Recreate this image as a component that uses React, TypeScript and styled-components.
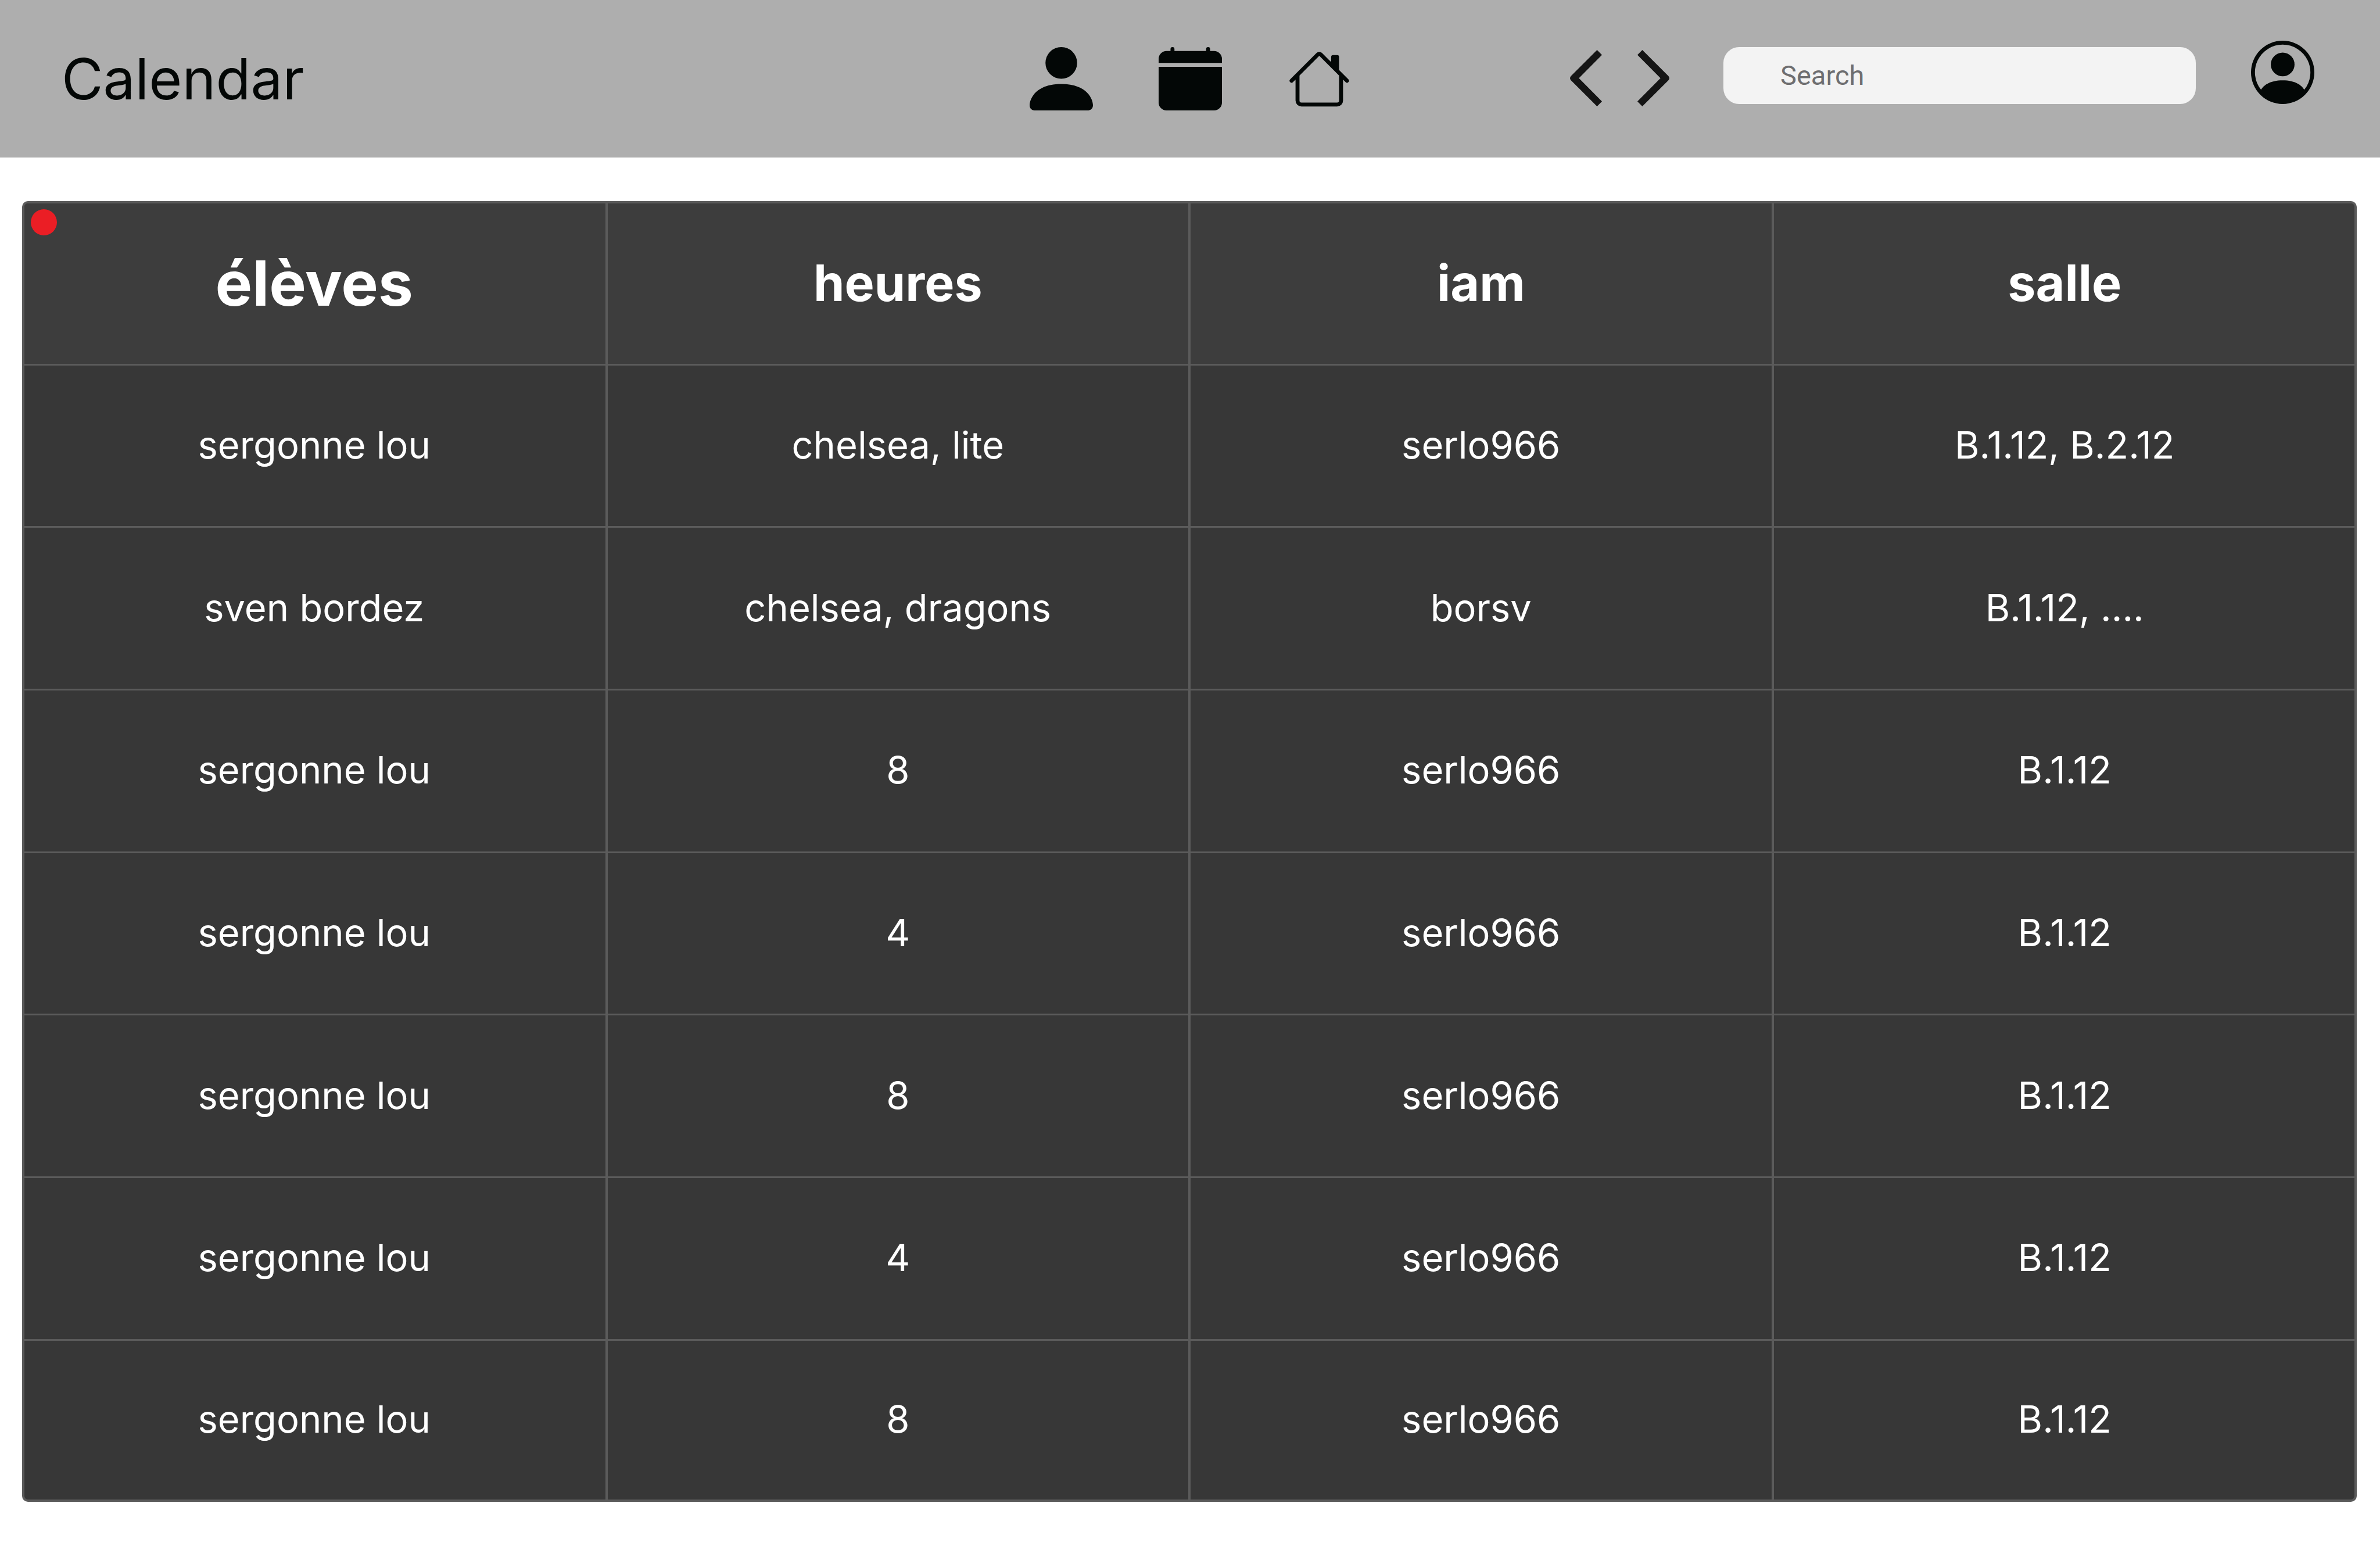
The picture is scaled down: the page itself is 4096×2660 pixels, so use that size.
import React from "react";
import styled, { createGlobalStyle } from "styled-components";

const GlobalStyle = createGlobalStyle`
  *, *::before, *::after { box-sizing: border-box; }
  body {
    margin: 0;
    background: #ffffff;
    font-family: Inter, "Liberation Sans", sans-serif;
  }
`;

const Page = styled.div`
  display: flex;
  flex-direction: column;
  min-height: 100vh;
`;

const TopBar = styled.header`
  display: grid;
  grid-template-columns: 1fr auto 1fr;
  height: 271px;
  padding: 0 106px;
  background: #aeaeae;
  color: #030706;
`;

const Title = styled.h1`
  align-self: center;
  margin: 0;
  font-size: 98px;
  line-height: 120px;
  font-weight: 400;
`;

const Nav = styled.nav`
  display: flex;
  align-self: center;
  gap: 113px;
`;

const IconLink = styled.a`
  display: block;
  color: inherit;

  svg { display: block; width: 109px; height: 109px; }
`;

const Tools = styled.div`
  display: flex;
  align-self: start;
  align-items: center;
  justify-content: flex-end;
  padding: 66px 7px 0 0;
`;

const Pager = styled.div`
  display: flex;
  gap: 61px;
  margin: 20px 93px 0 0;
`;

const IconButton = styled.button`
  display: block;
  padding: 0;
  border: 0;
  background: none;
  color: inherit;
  cursor: pointer;

  svg { display: block; }
`;

const SearchInput = styled.input`
  width: 813px;
  height: 98px;
  margin: 10px 95px 0 0;
  padding: 0 40px 0 98px;
  border: 0;
  border-radius: 27px;
  background: #f3f3f3;
  color: #2b2b2b;
  font-family: Roboto, "Liberation Sans", sans-serif;
  font-size: 47px;
  font-weight: 400;

  &::placeholder { color: #6e6e70; opacity: 1; }
`;

const Main = styled.main`
  flex: 1;
  padding: 75px 40px 76px 38px;
`;

const TableFrame = styled.div`
  position: relative;
  overflow: hidden;
  border: 4px solid #5b5b5b;
  border-radius: 10px;
  background: #373737;
`;

const RecordDot = styled.span`
  position: absolute;
  top: 10px;
  left: 11px;
  width: 45px;
  height: 45px;
  border-radius: 50%;
  background: #eb1e25;
`;

const Table = styled.table`
  width: calc(100% + 4px);
  height: calc(100vh - 430px);
  margin: 0 -2px;
  table-layout: fixed;
  border-collapse: collapse;
  color: #ffffff;
  text-align: center;

  tr + tr > td, tbody > tr:first-child > td { border-top: 3px solid #5b5b5b; }
  th + th, td + td { border-left: 4px solid #5b5b5b; }
`;

const HeadCell = styled.th<{ $large?: boolean }>`
  height: 277px;
  padding: 0 0 2px;
  background: #3d3d3d;
  font-size: ${(p) => (p.$large ? 107 : 86)}px;
  line-height: 130px;
  font-weight: 700;
`;

const Cell = styled.td`
  padding: 0 0 2px;
  font-size: 65px;
  line-height: 80px;
`;

const PersonIcon = () => (
  <svg viewBox="2 2 12 12" fill="currentColor" aria-hidden="true">
    <path d="M3 14s-1 0-1-1 1-4 6-4 6 3 6 4-1 1-1 1H3zm5-6a3 3 0 1 0 0-6 3 3 0 0 0 0 6z" />
  </svg>
);

const CalendarIcon = () => (
  <svg viewBox="0 0 16 16" fill="currentColor" aria-hidden="true">
    <path d="M3.5 0a.5.5 0 0 1 .5.5V1h8V.5a.5.5 0 0 1 1 0V1h1a2 2 0 0 1 2 2v11a2 2 0 0 1-2 2H2a2 2 0 0 1-2-2V5h16V4H0V3a2 2 0 0 1 2-2h1V.5a.5.5 0 0 1 .5-.5z" />
  </svg>
);

const HouseIcon = () => (
  <svg viewBox="0 0 16 16" fill="currentColor" aria-hidden="true">
    <path
      fillRule="evenodd"
      d="M8.707 1.5a1 1 0 0 0-1.414 0L.646 8.146a.5.5 0 0 0 .708.708L2 8.207V13.5A1.5 1.5 0 0 0 3.5 15h9a1.5 1.5 0 0 0 1.5-1.5V8.207l.646.647a.5.5 0 0 0 .708-.708L13 5.793V2.5a.5.5 0 0 0-.5-.5h-1a.5.5 0 0 0-.5.5v1.293L8.707 1.5zM13 7.207V13.5a.5.5 0 0 1-.5.5h-9a.5.5 0 0 1-.5-.5V7.207l5-5 5 5z"
    />
  </svg>
);

const AccountIcon = () => (
  <svg width="109" height="109" viewBox="0 0 16 16" fill="currentColor" aria-hidden="true">
    <path d="M11 6a3 3 0 1 1-6 0 3 3 0 0 1 6 0z" />
    <path
      fillRule="evenodd"
      d="M0 8a8 8 0 1 1 16 0A8 8 0 0 1 0 8zm8-7a7 7 0 0 0-5.468 11.37C3.242 11.226 4.805 10 8 10s4.757 1.225 5.468 2.37A7 7 0 0 0 8 1z"
    />
  </svg>
);

const Chevron = ({ flip = false }: { flip?: boolean }) => (
  <svg width="55" height="97" viewBox="0 0 169 298" fill="#151515" aria-hidden="true">
    <path
      transform={flip ? "translate(169 0) scale(-1 1)" : undefined}
      d="M143 0L169 26L47 149L169 272L143 298L6 161Q0 155 0 149Q0 143 6 137Z"
    />
  </svg>
);

const columns = ["élèves", "heures", "iam", "salle"];

const rows = [
  ["sergonne lou", "chelsea, lite", "serlo966", "B.1.12, B.2.12"],
  ["sven bordez", "chelsea, dragons", "borsv", "B.1.12, ...."],
  ["sergonne lou", "8", "serlo966", "B.1.12"],
  ["sergonne lou", "4", "serlo966", "B.1.12"],
  ["sergonne lou", "8", "serlo966", "B.1.12"],
  ["sergonne lou", "4", "serlo966", "B.1.12"],
  ["sergonne lou", "8", "serlo966", "B.1.12"],
];

export default function App() {
  return (
    <Page>
      <GlobalStyle />
      <TopBar>
        <Title>Calendar</Title>
        <Nav aria-label="Main">
          <IconLink href="#profile" aria-label="Profile"><PersonIcon /></IconLink>
          <IconLink href="#calendar" aria-label="Calendar"><CalendarIcon /></IconLink>
          <IconLink href="#home" aria-label="Home"><HouseIcon /></IconLink>
        </Nav>
        <Tools>
          <Pager>
            <IconButton type="button" aria-label="Previous"><Chevron /></IconButton>
            <IconButton type="button" aria-label="Next"><Chevron flip /></IconButton>
          </Pager>
          <SearchInput type="search" placeholder="Search" aria-label="Search" />
          <IconButton type="button" aria-label="Account"><AccountIcon /></IconButton>
        </Tools>
      </TopBar>
      <Main>
        <TableFrame>
          <Table>
            <thead>
              <tr>
                {columns.map((name, i) => (
                  <HeadCell key={name} scope="col" $large={i === 0}>{name}</HeadCell>
                ))}
              </tr>
            </thead>
            <tbody>
              {rows.map((row, r) => (
                <tr key={r}>
                  {row.map((value, c) => (
                    <Cell key={c}>{value}</Cell>
                  ))}
                </tr>
              ))}
            </tbody>
          </Table>
          <RecordDot />
        </TableFrame>
      </Main>
    </Page>
  );
}
